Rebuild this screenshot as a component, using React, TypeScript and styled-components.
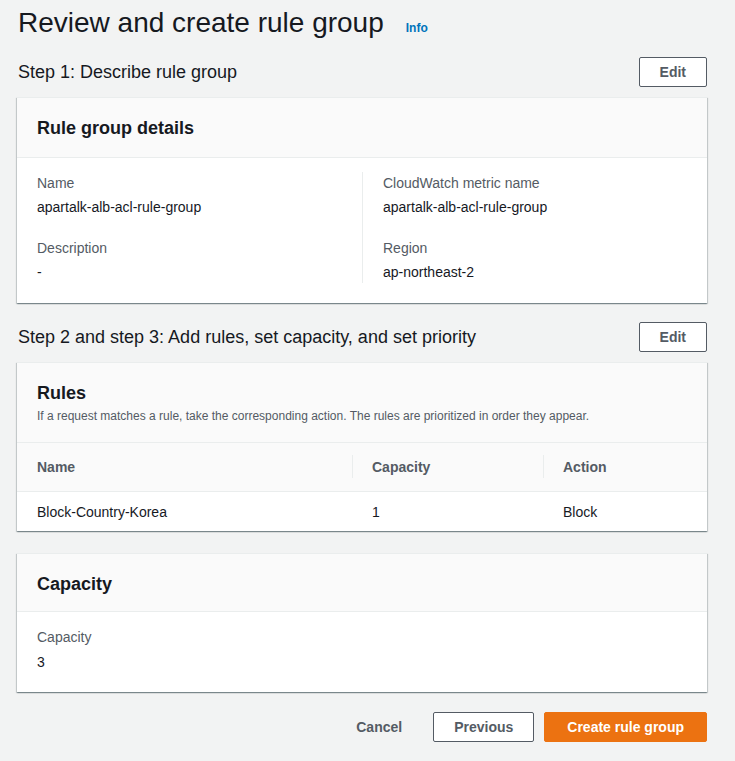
import React from "react";
import styled, { createGlobalStyle } from "styled-components";

const GlobalStyle = createGlobalStyle`
  html, body {
    margin: 0;
    padding: 0;
    background: #f2f3f3;
  }
  body {
    font-family: "Liberation Sans", Arial, sans-serif;
    color: #16191f;
    font-size: 14px;
    line-height: 22px;
  }
  * { box-sizing: border-box; }
`;

const Page = styled.div`
  display: flex;
  flex-direction: column;
  padding: 0 28px 19px 17px;
  min-height: 761px;
`;

const TitleRow = styled.div`
  display: flex;
  align-items: baseline;
  gap: 22px;
  padding-top: 5px;
  padding-left: 1px;
`;

const Title = styled.h1`
  margin: 0;
  font-size: 28px;
  font-weight: 400;
  line-height: 36px;
  color: #16191f;
`;

const InfoLink = styled.a`
  font-size: 12px;
  font-weight: 700;
  color: #0073bb;
  text-decoration: none;
`;

const SectionRow = styled.div<{ $top: number }>`
  display: flex;
  justify-content: space-between;
  align-items: center;
  margin-top: ${(p) => p.$top}px;
  margin-bottom: 10px;
`;

const SectionTitle = styled.h2`
  margin: 0;
  padding-left: 1px;
  font-size: 18px;
  font-weight: 400;
  line-height: 22px;
  color: #16191f;
`;

const Button = styled.button<{ $variant?: "normal" | "primary" | "link" }>`
  height: 30px;
  padding: 0 ${(p) => (p.$variant === "primary" ? 22 : 20)}px;
  border-radius: 2px;
  font-family: inherit;
  font-size: 14px;
  font-weight: 700;
  line-height: 22px;
  cursor: pointer;
  border: 1px solid
    ${(p) =>
      p.$variant === "primary"
        ? "#ec7211"
        : p.$variant === "link"
        ? "transparent"
        : "#545b64"};
  background: ${(p) =>
    p.$variant === "primary" ? "#ec7211" : p.$variant === "link" ? "transparent" : "#ffffff"};
  color: ${(p) => (p.$variant === "primary" ? "#ffffff" : "#545b64")};
`;

const Card = styled.section<{ $top?: number }>`
  background: #ffffff;
  border-top: 1px solid #eaeded;
  margin-top: ${(p) => p.$top ?? 0}px;
  box-shadow: 0 1px 1px 0 rgba(0, 28, 36, 0.3), 1px 1px 1px 0 rgba(0, 28, 36, 0.15),
    -1px 1px 1px 0 rgba(0, 28, 36, 0.15);
`;

const CardHeader = styled.div<{ $pb?: number }>`
  background: #fafafa;
  padding: 19px 20px ${(p) => p.$pb ?? 18}px;
  border-bottom: 1px solid #eaeded;
`;

const CardTitle = styled.h3`
  margin: 0;
  font-size: 18px;
  font-weight: 700;
  line-height: 22px;
  color: #16191f;
`;

const CardDescription = styled.p`
  margin: 4px 0 0;
  font-size: 12px;
  line-height: 16px;
  color: #545b64;
`;

const DetailGrid = styled.div`
  display: grid;
  grid-template-columns: 1fr 1fr;
  padding: 14px 20px 20px;
`;

const DetailColumn = styled.div<{ $divider?: boolean }>`
  display: flex;
  flex-direction: column;
  gap: 19px;
  ${(p) => (p.$divider ? "border-left: 1px solid #eaeded; padding-left: 20px;" : "")}
`;

const Field = styled.div`
  display: flex;
  flex-direction: column;
  gap: 2px;
`;

const Label = styled.div`
  font-size: 14px;
  line-height: 22px;
  color: #545b64;
`;

const Value = styled.div`
  font-size: 14px;
  line-height: 22px;
  color: #16191f;
`;

const SingleBody = styled.div`
  padding: 14px 20px 19px;
  display: flex;
  flex-direction: column;
  gap: 3px;
`;

const Table = styled.div`
  display: grid;
  grid-template-columns: 335px 191px 1fr;
`;

const HeadCell = styled.div<{ $divider?: boolean }>`
  background: #fafafa;
  height: 49px;
  display: flex;
  align-items: center;
  padding: 0 20px;
  font-weight: 700;
  color: #545b64;
  border-bottom: 1px solid #eaeded;
  position: relative;
  ${(p) =>
    p.$divider
      ? `&::before {
    content: "";
    position: absolute;
    left: 0;
    top: 12px;
    height: 23px;
    border-left: 1px solid #eaeded;
  }`
      : ""}
`;

const BodyCell = styled.div`
  height: 39px;
  display: flex;
  align-items: center;
  padding: 0 20px;
  color: #16191f;
`;

const Footer = styled.div`
  display: flex;
  justify-content: flex-end;
  align-items: center;
  gap: 10px;
  margin-top: 20px;
`;

export default function App() {
  return (
    <>
      <GlobalStyle />
      <Page>
        <TitleRow>
          <Title>Review and create rule group</Title>
          <InfoLink>Info</InfoLink>
        </TitleRow>

        <SectionRow $top={16}>
          <SectionTitle>Step 1: Describe rule group</SectionTitle>
          <Button>Edit</Button>
        </SectionRow>
        <Card>
          <CardHeader $pb={18}>
            <CardTitle>Rule group details</CardTitle>
          </CardHeader>
          <DetailGrid>
            <DetailColumn>
              <Field>
                <Label>Name</Label>
                <Value>apartalk-alb-acl-rule-group</Value>
              </Field>
              <Field>
                <Label>Description</Label>
                <Value>-</Value>
              </Field>
            </DetailColumn>
            <DetailColumn $divider>
              <Field>
                <Label>CloudWatch metric name</Label>
                <Value>apartalk-alb-acl-rule-group</Value>
              </Field>
              <Field>
                <Label>Region</Label>
                <Value>ap-northeast-2</Value>
              </Field>
            </DetailColumn>
          </DetailGrid>
        </Card>

        <SectionRow $top={19}>
          <SectionTitle>Step 2 and step 3: Add rules, set capacity, and set priority</SectionTitle>
          <Button>Edit</Button>
        </SectionRow>
        <Card>
          <CardHeader $pb={18}>
            <CardTitle>Rules</CardTitle>
            <CardDescription>
              If a request matches a rule, take the corresponding action. The rules are prioritized in
              order they appear.
            </CardDescription>
          </CardHeader>
          <Table>
            <HeadCell>Name</HeadCell>
            <HeadCell $divider>Capacity</HeadCell>
            <HeadCell $divider>Action</HeadCell>
            <BodyCell>Block-Country-Korea</BodyCell>
            <BodyCell>1</BodyCell>
            <BodyCell>Block</BodyCell>
          </Table>
        </Card>

        <Card $top={22}>
          <CardHeader $pb={16}>
            <CardTitle>Capacity</CardTitle>
          </CardHeader>
          <SingleBody>
            <Label>Capacity</Label>
            <Value>3</Value>
          </SingleBody>
        </Card>

        <Footer>
          <Button $variant="link">Cancel</Button>
          <Button>Previous</Button>
          <Button $variant="primary">Create rule group</Button>
        </Footer>
      </Page>
    </>
  );
}
